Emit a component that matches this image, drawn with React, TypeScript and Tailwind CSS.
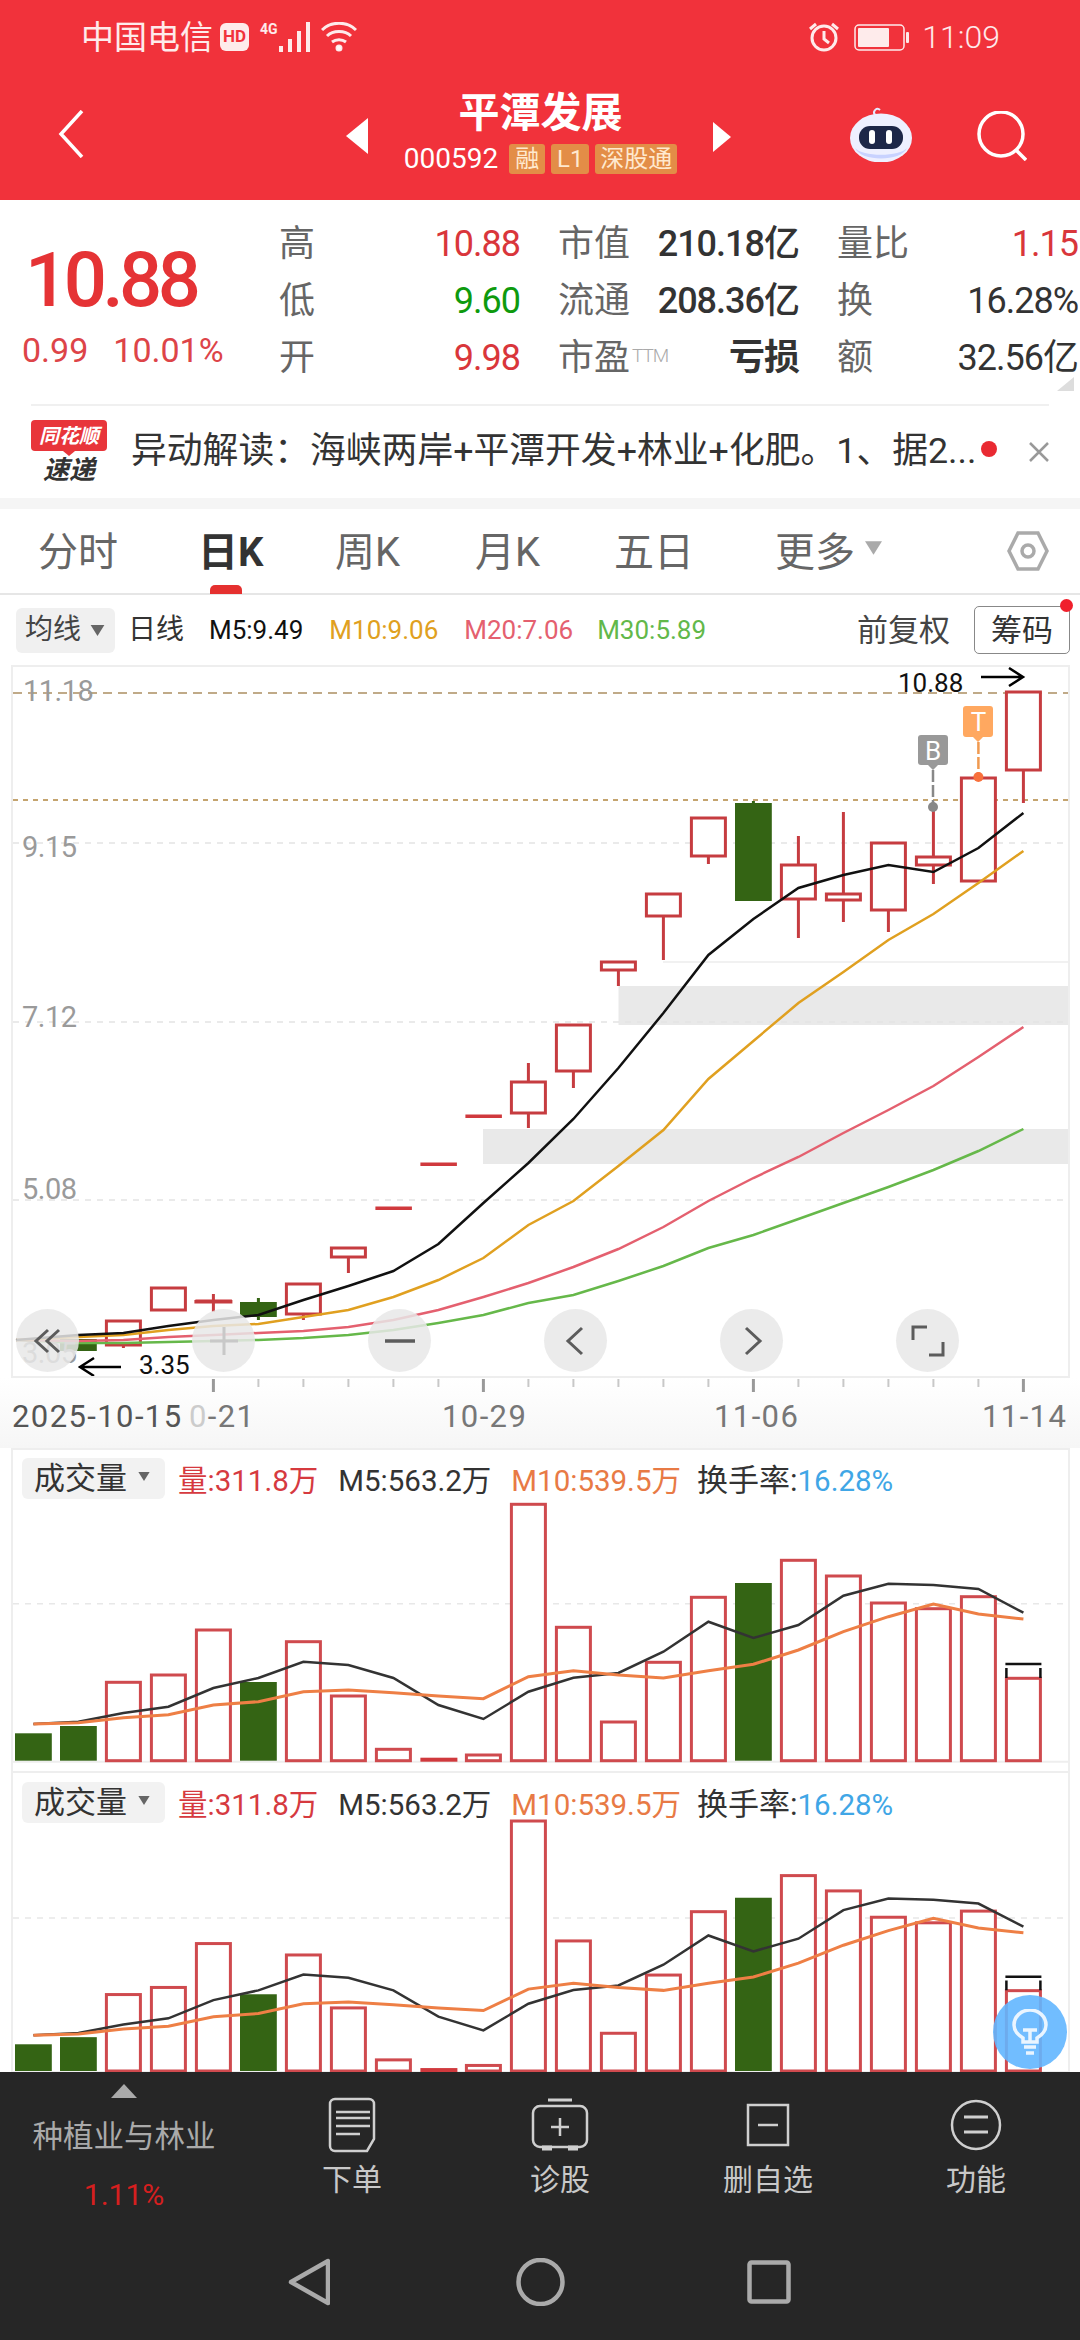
const cx = (i: number) => 33.4 + 45 * i;

// [index, bodyTop, bodyBottom, wickTop, wickBottom, green]
const candles: [number, number, number, number?, number?, boolean?][] = [
  [1, 1339, 1351, 1339, 1351, true],
  [2, 1321, 1345, 1321, 1348],
  [3, 1288, 1310],
  [4, 1300, 1302, 1294, 1312],
  [5, 1302, 1317, 1298, 1320, true],
  [6, 1284, 1314, 1284, 1320],
  [7, 1248, 1257, 1248, 1273],
  [8, 1207, 1209],
  [9, 1163, 1165],
  [10, 1115, 1117],
  [11, 1082, 1113, 1063, 1128],
  [12, 1025, 1071, 1025, 1088],
  [13, 962, 970, 962, 986],
  [14, 894, 916, 894, 960],
  [15, 818, 856, 818, 864],
  [16, 803, 901, 801, 901, true],
  [17, 865, 899, 836, 938],
  [18, 894, 900, 812, 922],
  [19, 843, 910, 843, 932],
  [20, 857, 865, 807, 884],
  [21, 778, 881],
  [22, 692, 770, 692, 803],
];

const m5 = [1335, 1333, 1326, 1320, 1315, 1300, 1286, 1271, 1244, 1203, 1163, 1119, 1068, 1013, 955, 919, 888, 875, 865, 872, 848, 813];
const m10 = [1337, 1335, 1330, 1326, 1324, 1317, 1310, 1297, 1280, 1258, 1225, 1201, 1166, 1130, 1079, 1041, 1003, 972, 940, 914, 883, 851];
const m20 = [1341, 1340, 1337, 1335, 1333, 1331, 1327, 1320, 1310, 1297, 1283, 1267, 1249, 1227, 1201, 1178, 1157, 1133, 1110, 1086, 1057, 1027];
const m30 = [1343, 1343, 1342, 1341, 1340, 1338, 1335, 1330, 1323, 1315, 1303, 1295, 1281, 1266, 1248, 1235, 1219, 1203, 1187, 1170, 1151, 1129];

const linePoints = (ys: number[]) => `16,1340 ` + ys.map((y, i) => `${cx(i + 1)},${y}`).join(' ');

const volTops = [1733.3, 1726, 1682.3, 1675, 1630, 1682, 1641.7, 1696, 1749.3, 1757.7, 1755, 1504.3, 1627.3, 1722, 1662.3, 1597.3, 1583, 1560.3, 1576, 1603, 1608.7, 1596.7, 1678.3];
const volGreen = [0, 1, 5, 16];
const volM5 = [1724, 1721.7, 1713, 1706.7, 1688, 1678, 1661.7, 1665, 1678, 1705, 1719, 1691.7, 1677.7, 1673, 1651.7, 1621.7, 1638, 1625, 1595.7, 1583.7, 1585, 1589, 1612.7];
const volM10 = [1724, 1722.7, 1717.7, 1714.7, 1705, 1701.7, 1691.7, 1690, 1692.7, 1696, 1698.7, 1676.7, 1670.7, 1675, 1678, 1670.7, 1664.3, 1650, 1631.7, 1616.7, 1604, 1614, 1619];

const Tri = ({ className }: { className: string }) => (
  <svg viewBox="0 0 10 8" className={className} fill="currentColor">
    <path d="M0 0h10L5 8z" />
  </svg>
);

const StatusBar = () => (
  <div className="flex h-[74px] items-center pl-[81px] pr-[80px] text-white/90">
    <span className="text-[33px] leading-none">中国电信</span>
    <span className="ml-[7px] flex h-[28px] w-[29px] items-center justify-center rounded-[6px] bg-white/90 text-[17px] font-bold text-[#f1323b]">HD</span>
    <span className="mb-[16px] ml-[11px] w-[18px] text-[14px] font-bold leading-none">4G</span>
    <svg viewBox="0 0 34 30" className="h-[30px] w-[34px]" fill="currentColor">
      <rect x="1" y="24" width="4" height="6" />
      <rect x="10" y="17" width="4" height="13" />
      <rect x="19" y="9" width="4" height="21" />
      <rect x="28" y="0" width="4" height="30" />
    </svg>
    <svg viewBox="0 0 36 30" className="ml-[9px] h-[30px] w-[36px]" fill="none" stroke="currentColor" strokeWidth="3">
      <path d="M1 8c9-9 25-9 34 0" />
      <path d="M6 14c6-6 18-6 24 0" />
      <path d="M11 20c4-3 10-3 14 0" />
      <circle cx="18" cy="26" r="2" fill="currentColor" />
    </svg>
    <svg viewBox="0 0 32 30" className="ml-auto h-[30px] w-[32px]" fill="none" stroke="currentColor" strokeWidth="3">
      <circle cx="16" cy="16" r="12" />
      <path d="M16 9v8l5 4M2 7l6-5M30 7l-6-5" />
    </svg>
    <svg viewBox="0 0 56 27" className="ml-[14px] h-[27px] w-[56px]">
      <rect x="1" y="1" width="49" height="25" rx="4" fill="none" stroke="currentColor" strokeWidth="1.5" />
      <rect x="4" y="4" width="31" height="19" rx="1" fill="currentColor" />
      <rect x="52" y="8" width="3" height="11" rx="1" fill="currentColor" />
    </svg>
    <span className="ml-[12px] text-[32px] font-light leading-none">11:09</span>
  </div>
);

const Badge = ({ text, w }: { text: string; w: string }) => (
  <span className={`flex h-[30px] items-center justify-center rounded-[3px] bg-[#e38d47] text-[24px] leading-none text-[#ffe9cf] ${w}`}>{text}</span>
);

const Robot = () => (
  <svg viewBox="0 0 62 56" className="h-[56px] w-[62px]">
    <path d="M25 9c-3-4 2-8 5-5" fill="none" stroke="#e6e9ff" strokeWidth="2" />
    <ellipse cx="31" cy="32" rx="31" ry="24.5" fill="#eef0ff" />
    <path d="M5 42c7 9 45 9 52 0-6 14-46 14-52 0z" fill="#c8d2ff" />
    <rect x="9" y="20" width="44" height="23" rx="11" fill="#1d2748" />
    <rect x="19" y="24" width="6" height="14" rx="3" fill="#fff" />
    <rect x="36" y="24" width="6" height="14" rx="3" fill="#fff" />
  </svg>
);

const Header = () => (
  <div className="h-[200px] bg-[#f1323b] text-white">
    <StatusBar />
    <div className="flex h-[126px] items-start">
      <svg viewBox="0 0 26 48" className="ml-[58px] mt-[36px] h-[48px] w-[26px]" fill="none" stroke="#fff" strokeWidth="3.5">
        <path d="M24 1L3 24l21 23" />
      </svg>
      <svg viewBox="0 0 22 36" className="ml-[262px] mt-[44px] h-[36px] w-[22px]" fill="#fff">
        <path d="M22 0v36L0 18z" />
      </svg>
      <div className="flex w-[345px] flex-col items-center">
        <div className="mt-[15px] text-[41px] font-bold leading-[48px]">平潭发展</div>
        <div className="mt-[7px] flex h-[30px] items-center gap-[6px]">
          <span className="mr-[5px] text-[28px] leading-none">000592</span>
          <Badge text="融" w="w-[36px]" />
          <Badge text="L1" w="w-[38px]" />
          <Badge text="深股通" w="w-[82px]" />
        </div>
      </div>
      <svg viewBox="0 0 18 30" className="mt-[48px] h-[30px] w-[18px]" fill="#fff">
        <path d="M0 0v30L18 15z" />
      </svg>
      <div className="ml-[119px] mt-[32px]">
        <Robot />
      </div>
      <svg viewBox="0 0 50 50" className="ml-[65px] mt-[37px] h-[50px] w-[50px]" fill="none" stroke="#fff" strokeWidth="3.5">
        <circle cx="24" cy="23" r="22" />
        <path d="M39 39l10 10" />
      </svg>
    </div>
  </div>
);

const Cell = ({ label, value, cls, sup }: { label: string; value: string; cls: string; sup?: string }) => (
  <div className="flex items-center justify-between">
    <span className="flex items-start text-[36px] leading-none text-[#666]">
      {label}
      {sup && <span className="ml-[2px] mt-[6px] text-[19px] font-light leading-none tracking-[-1px] text-[#aaa]">{sup}</span>}
    </span>
    <span className={`text-[36px] leading-none tracking-[-1px] ${cls}`}>{value}</span>
  </div>
);

const Quote = () => (
  <div className="relative flex h-[204px] pt-[15px]">
    <div className="w-[279px]">
      <div className="mt-[27px] pl-[25px] text-[76px] font-medium leading-none tracking-[-4.5px] text-[#e53335]">10.88</div>
      <div className="mt-[15px] flex pl-[22px] text-[34px] leading-none text-[#dd4448]">
        <span>0.99</span>
        <span className="ml-[25px]">10.01%</span>
      </div>
    </div>
    <div className="grid h-[171px] w-[799px] grid-cols-3 grid-rows-3 gap-x-[38px]">
      <Cell label="高" value="10.88" cls="text-[#d9363b]" />
      <Cell label="市值" value="210.18亿" cls="font-medium text-[#333]" />
      <Cell label="量比" value="1.15" cls="text-[#d9363b]" />
      <Cell label="低" value="9.60" cls="text-[#0e9a0e]" />
      <Cell label="流通" value="208.36亿" cls="font-medium text-[#333]" />
      <Cell label="换" value="16.28%" cls="text-[#333]" />
      <Cell label="开" value="9.98" cls="text-[#d9363b]" />
      <Cell label="市盈" sup="TTM" value="亏损" cls="font-bold text-[#333]" />
      <Cell label="额" value="32.56亿" cls="text-[#333]" />
    </div>
    <svg viewBox="0 0 17 14" className="absolute right-[6px] top-[177px] h-[14px] w-[17px]" fill="#ddd">
      <path d="M17 0v14H0z" />
    </svg>
  </div>
);

const News = () => (
  <div className="mx-[31px] flex h-[94px] items-center border-t-2 border-[#f0f0f0]">
    <div className="flex h-[64px] w-[76px] shrink-0 flex-col items-center">
      <div className="flex h-[31px] w-[76px] items-center justify-center rounded-[4px] bg-[#e8353a] text-[20px] font-bold italic leading-none text-white">同花顺</div>
      <svg viewBox="0 0 12 5" className="h-[5px] w-[12px]" fill="#e8353a">
        <path d="M0 0h12L6 5z" />
      </svg>
      <div className="text-[26px] font-bold italic leading-[28px] text-[#333]">速递</div>
    </div>
    <div className="ml-[24px] w-[842px] shrink-0 whitespace-nowrap text-[35.8px] leading-none text-[#333]">异动解读：海峡两岸+平潭开发+林业+化肥。1、据2...</div>
    <div className="mb-[6px] ml-[8px] h-[16px] w-[16px] shrink-0 rounded-full bg-[#e92a32]" />
    <svg viewBox="0 0 20 20" className="ml-[32px] h-[20px] w-[20px] shrink-0" fill="none" stroke="#999" strokeWidth="2.5">
      <path d="M1 1l18 18M19 1L1 19" />
    </svg>
  </div>
);

const Tabs = () => (
  <div className="flex h-[86px] items-center border-b-2 border-[#e6e6e6] pl-[38px] pt-[4px] text-[40px] leading-none text-[#666]">
    <span className="w-[160px]">分时</span>
    <span className="relative w-[137px] font-bold text-[#333]">
      日K
      <span className="absolute left-[12px] top-[52px] h-[9px] w-[32px] rounded-t-[5px] bg-[#e5302f]" />
    </span>
    <span className="w-[140px]">周K</span>
    <span className="w-[139px]">月K</span>
    <span className="w-[161px]">五日</span>
    <span className="flex w-[232px] items-center">
      更多
      <Tri className="mb-[10px] ml-[10px] h-[14px] w-[17px] text-[#aaa]" />
    </span>
    <svg viewBox="0 0 42 40" className="mb-[4px] h-[40px] w-[42px]" fill="none" stroke="#aaa" strokeWidth="3.5">
      <path d="M11 2h20l9 18-9 18H11L2 20z" />
      <circle cx="21" cy="20" r="6" />
    </svg>
  </div>
);

const IndicatorBar = () => (
  <div className="flex h-[70px] items-center pl-[16px] text-[26px] leading-none">
    <div className="flex h-[45px] w-[99px] items-center rounded-[6px] bg-[#f0f0f0] pl-[9px] text-[28px] text-[#444]">
      均线
      <Tri className="ml-[9px] h-[11px] w-[15px] text-[#666]" />
    </div>
    <span className="ml-[13px] text-[28px] text-[#333]">日线</span>
    <span className="ml-[25px] text-[#111]">M5:9.49</span>
    <span className="ml-[26px] text-[#e0a020]">M10:9.06</span>
    <span className="ml-[26px] text-[#e4606f]">M20:7.06</span>
    <span className="ml-[24px] text-[#62b84a]">M30:5.89</span>
    <span className="ml-[151px] text-[31px] text-[#444]">前复权</span>
    <div className="relative ml-[24px] flex h-[48px] w-[96px] items-center justify-center rounded-[5px] border border-[#888] text-[31px] text-[#333]">
      筹码
      <span className="absolute -right-[4px] -top-[8px] h-[13px] w-[13px] rounded-full bg-[#f0202c]" />
    </div>
  </div>
);

const Candles = () => (
  <>
    {candles.map(([i, top, bottom, wickTop, wickBottom, green]) => {
      const x = cx(i);
      const color = green ? '#346414' : '#c63c40';
      const thin = bottom - top <= 2;
      return (
        <g key={i}>
          {wickTop !== undefined && <line x1={x} x2={x} y1={wickTop} y2={wickBottom} stroke={color} strokeWidth="3" />}
          {thin ? (
            <rect x={x - 18} y={top - 0.5} width="36.5" height="3.5" fill="#d0393d" />
          ) : green ? (
            <rect x={x - 18.4} y={top} width="36.8" height={bottom - top} fill={color} />
          ) : (
            <rect x={x - 17} y={top} width="34" height={bottom - top} fill="#fff" stroke={color} strokeWidth="3" />
          )}
        </g>
      );
    })}
    <rect x={cx(4) - 19} y="1300" width="38" height="3.5" fill="#c63c40" />
  </>
);

const ChartSvg = () => (
  <svg viewBox="13 667 1055 709" className="block h-[709px] w-[1055px]">
    <rect x="618.5" y="986" width="460" height="39" fill="#e9e9e9" />
    <rect x="483" y="1129" width="600" height="35" fill="#e9e9e9" />
    <path d="M13 843H1070M13 1022H1070M13 1200H1070" stroke="#e4e4e4" strokeWidth="1.5" strokeDasharray="6 6" />
    <path d="M663 962H1070" stroke="#ececec" strokeWidth="1.5" />
    <path d="M13 693H1070" stroke="#c0aa88" strokeWidth="2" strokeDasharray="9 6" />
    <path d="M13 800H1070" stroke="#c4a46f" strokeWidth="2" strokeDasharray="5 5" />
    <Candles />
    <polyline points={linePoints(m30)} fill="none" stroke="#66b84a" strokeWidth="2.5" />
    <polyline points={linePoints(m20)} fill="none" stroke="#e4606f" strokeWidth="2.5" />
    <polyline points={linePoints(m10)} fill="none" stroke="#e0a020" strokeWidth="2.5" />
    <polyline points={linePoints(m5)} fill="none" stroke="#111" strokeWidth="2.5" />
    <path d="M981 677h42m-14-9l14 9-14 9" fill="none" stroke="#000" strokeWidth="2.5" />
    <path d="M121 1367H80m14-9l-14 9 14 9" fill="none" stroke="#000" strokeWidth="2.5" />

    <line x1="933" x2="933" y1="770" y2="807" stroke="#888" strokeWidth="2.5" strokeDasharray="12 3" />
    <circle cx="933" cy="807" r="5" fill="#888" />
    <path d="M921 735h24a3 3 0 0 1 3 3v24a3 3 0 0 1-3 3h-7l-5 5-5-5h-7a3 3 0 0 1-3-3v-24a3 3 0 0 1 3-3z" fill="#999" />
    <text x="933" y="760" textAnchor="middle" fontSize="26" fontFamily="Roboto" fill="#fff">B</text>

    <line x1="978.4" x2="978.4" y1="742" y2="777" stroke="#f09a50" strokeWidth="2.5" strokeDasharray="12 3" />
    <circle cx="978.4" cy="777" r="5" fill="#f8703c" />
    <path d="M966 706h24a3 3 0 0 1 3 3v25a3 3 0 0 1-3 3h-7l-5 5-5-5h-7a3 3 0 0 1-3-3v-25a3 3 0 0 1 3-3z" fill="#ffa860" />
    <text x="978.4" y="731" textAnchor="middle" fontSize="26" fontFamily="Roboto" fill="#fff">T</text>
  </svg>
);

const RoundButton = ({ children }: { children: React.ReactNode }) => (
  <div className="flex h-[63px] w-[63px] items-center justify-center rounded-full bg-[#e8e8e8]/85">
    <svg viewBox="0 0 34 34" className="h-[34px] w-[34px]" fill="none" stroke="#5c5c5c" strokeWidth="3">
      {children}
    </svg>
  </div>
);

const AxisLabel = ({ text, cls }: { text: string; cls: string }) => (
  <span className={`absolute text-[29px] leading-[28px] tracking-[-0.5px] text-[#9a9a9a] ${cls}`}>{text}</span>
);

const KChart = () => (
  <div className="relative ml-[11px] mr-[10px] h-[713px] border-2 border-[#eee]">
    <ChartSvg />
    <AxisLabel text="11.18" cls="left-[10px] top-[10px]" />
    <AxisLabel text="9.15" cls="left-[9px] top-[166px]" />
    <AxisLabel text="7.12" cls="left-[9px] top-[336px]" />
    <AxisLabel text="5.08" cls="left-[9px] top-[508px]" />
    <AxisLabel text="3.05" cls="left-[9px] top-[672px]" />
    <span className="absolute left-[885px] top-[3px] text-[26px] leading-[26px] text-[#111]">10.88</span>
    <span className="absolute left-[126px] top-[685px] text-[26px] leading-[26px] text-[#111]">3.35</span>
    <div className="absolute left-[3px] top-[642px] flex gap-[113px]">
      <RoundButton>
        <path d="M17 6L5 17l12 11M28 6L16 17l12 11" />
      </RoundButton>
      <RoundButton>
        <path d="M17 3v28M3 17h28" stroke="#c8c8c8" />
      </RoundButton>
      <RoundButton>
        <path d="M2 17h30" strokeWidth="3.5" />
      </RoundButton>
      <RoundButton>
        <path d="M23 4L9 17l14 13" />
      </RoundButton>
      <RoundButton>
        <path d="M11 4l14 13-14 13" />
      </RoundButton>
      <RoundButton>
        <path d="M16 3H2v13M18 31h14V18" />
      </RoundButton>
    </div>
  </div>
);

const TimeAxis = () => (
  <div className="h-[70px] bg-gradient-to-b from-white to-[#f6f6f6]">
    <svg viewBox="0 1378 1080 16" className="block h-[16px] w-[1080px]">
      {Array.from({ length: 19 }, (_, k) => k + 4).map((i) => {
        const major = i === 4 || i === 10 || i === 16 || i === 22;
        return (
          <line key={i} x1={cx(i)} x2={cx(i)} y1="1379" y2={major ? 1392 : 1387} stroke={major ? '#999' : '#c8c8c8'} strokeWidth={major ? 3 : 2} />
        );
      })}
    </svg>
    <div className="mt-[7px] flex h-[30px] items-center whitespace-nowrap pl-[12px] text-[31px] leading-none tracking-[1.4px] text-[#777]">
      <span className="w-[177px] shrink-0 text-[#555]">2025-10-15</span>
      <span className="w-[65px] shrink-0">
        <span className="text-[#ccc]">0</span>-21
      </span>
      <span className="ml-[188px] w-[85px] shrink-0">10-29</span>
      <span className="ml-[187px] w-[85px] shrink-0">11-06</span>
      <span className="ml-[183px] shrink-0">11-14</span>
    </div>
  </div>
);

const VolumePanel = ({ outer, svgTop, svgH, head, pad, base, scale }: { outer: string; svgTop: number; svgH: string; head: string; pad: string; base: number; scale: number }) => {
  const map = (v: number) => base - (1760.7 - v) * scale;
  const line = (vals: number[]) => vals.map((v, i) => `${cx(i)},${map(v)}`).join(' ');
  const vbH = parseInt(svgH.replace(/\D/g, ''), 10);
  return (
    <div className={`ml-[11px] mr-[10px] flex flex-col border-x-2 border-t-2 border-[#eee] ${outer} ${pad}`}>
      <div className={`flex shrink-0 items-start text-[29.5px] leading-[46px] ${head}`}>
        <div className="ml-[9px] flex h-[41px] w-[143px] items-center rounded-[6px] bg-[#f2f2f2] pl-[12px] text-[31px] text-[#333]">
          成交量
          <Tri className="mb-[4px] ml-[10px] h-[9px] w-[14px] text-[#666]" />
        </div>
        <span className="ml-[13px] text-[#d63a3f]">量:311.8万</span>
        <span className="ml-[20px] text-[#333]">M5:563.2万</span>
        <span className="ml-[20px] text-[#e87a45]">M10:539.5万</span>
        <span className="ml-[16px] text-[31px] text-[#333]">
          换手率:<span className="text-[29.5px] text-[#40a6e6]">16.28%</span>
        </span>
      </div>
      <svg viewBox={`13 ${svgTop} 1055 ${vbH}`} className={`block w-[1055px] shrink-0 ${svgH}`}>
        <line x1="13" x2="1068" y1={map(1603.7)} y2={map(1603.7)} stroke="#e8e8e8" strokeWidth="1.5" strokeDasharray="6 6" />
        <line x1="13" x2="1068" y1={base + 1} y2={base + 1} stroke="#eee" strokeWidth="2" />
        {volTops.map((t, i) => {
          const x = cx(i);
          const y = map(t);
          if (volGreen.includes(i)) return <rect key={i} x={x - 18.4} y={y} width="36.8" height={base - y} fill="#346414" />;
          if (i === 9) return <rect key={i} x={x - 18} y={y} width="37" height={base - y + 1} fill="#d0393d" />;
          return <rect key={i} x={x - 17} y={y} width="34" height={base - y} fill="#fff" stroke="#cf4a4e" strokeWidth="3" />;
        })}
        <path d={`M${cx(22) - 17} ${map(1678)}V${map(1668)}M${cx(22) + 17} ${map(1678)}V${map(1668)}`} stroke="#111" strokeWidth="2.5" />
        <line x1={cx(22) - 18} x2={cx(22) + 18} y1={map(1664)} y2={map(1664)} stroke="#111" strokeWidth="2.5" />
        <polyline points={line(volM5)} fill="none" stroke="#333" strokeWidth="2.5" />
        <polyline points={line(volM10)} fill="none" stroke="#ee7f45" strokeWidth="3" />
      </svg>
    </div>
  );
};

const Action = ({ label, children }: { label: string; children: React.ReactNode }) => (
  <div className="flex flex-col items-center pt-[23px]">
    <div className="flex h-[60px] items-center">{children}</div>
    <div className="mt-[5px] text-[30px] leading-[40px] text-[#c8c8c8]">{label}</div>
  </div>
);

const BottomBar = () => (
  <div className="relative h-[268px] bg-[#262626]">
    <div className="grid h-[160px] grid-cols-[248px_repeat(4,208px)]">
      <div className="flex flex-col items-center pt-[12px]">
        <svg viewBox="0 0 26 14" className="h-[14px] w-[26px]" fill="#aaa">
          <path d="M13 0l13 14H0z" />
        </svg>
        <div className="mt-[19px] text-[30.5px] leading-[40px] text-[#aaa]">种植业与林业</div>
        <div className="mt-[18px] text-[30px] leading-[40px] text-[#d61f1f]">1.11%</div>
      </div>
      <Action label="下单">
        <svg viewBox="0 0 48 56" className="h-[56px] w-[48px]" fill="none" stroke="#cfcfcf" strokeWidth="2.5">
          <path d="M7 2h34a5 5 0 0 1 5 5v35l-7 12H7a5 5 0 0 1-5-5V7a5 5 0 0 1 5-5z" />
          <path d="M8 15h34M8 21h34M8 29h34M8 37h24" />
        </svg>
      </Action>
      <Action label="诊股">
        <svg viewBox="0 0 58 54" className="h-[54px] w-[58px]" fill="none" stroke="#cfcfcf" strokeWidth="2.5">
          <path d="M17 2h24" strokeWidth="3" />
          <rect x="2" y="8" width="54" height="41" rx="7" />
          <path d="M29 20v18M20 29h18" />
          <path d="M11 50h10M37 50h10" strokeWidth="5" />
        </svg>
      </Action>
      <Action label="删自选">
        <svg viewBox="0 0 44 44" className="h-[44px] w-[44px]" fill="none" stroke="#cfcfcf" strokeWidth="2.5">
          <rect x="2" y="2" width="40" height="40" />
          <path d="M12 22h20" />
        </svg>
      </Action>
      <Action label="功能">
        <svg viewBox="0 0 52 52" className="h-[52px] w-[52px]" fill="none" stroke="#cfcfcf" strokeWidth="2.5">
          <circle cx="26" cy="26" r="24" />
          <path d="M14 18h24M14 33h24" strokeWidth="3" />
        </svg>
      </Action>
    </div>
    <div className="flex h-[108px] items-center pb-[8px] pl-[288px]">
      <svg viewBox="0 0 42 48" className="h-[48px] w-[42px]" fill="none" stroke="#aaa" strokeWidth="4.5" strokeLinejoin="round">
        <path d="M40 3v42L3 24z" />
      </svg>
      <svg viewBox="0 0 49 48" className="ml-[186px] h-[48px] w-[49px]" fill="none" stroke="#aaa" strokeWidth="4.5">
        <circle cx="24.5" cy="24" r="22" />
      </svg>
      <svg viewBox="0 0 44 44" className="ml-[182px] h-[44px] w-[44px]" fill="none" stroke="#aaa" strokeWidth="4.5" strokeLinejoin="round">
        <rect x="2.5" y="2.5" width="39" height="39" rx="2" />
      </svg>
    </div>
    <div className="absolute -top-[77px] left-[993px] flex h-[74px] w-[74px] items-center justify-center rounded-full bg-[#62b6ff]/90">
      <svg viewBox="0 0 36 46" className="h-[46px] w-[36px]" fill="none" stroke="#eaf5ff" strokeWidth="3.5">
        <path d="M11 33v-4C6 26 2 22 2 16a16 15 0 0 1 32 0c0 6-4 10-9 13v4z" />
        <path d="M11 21h14M18 21v12M12 38h12M14 44h8" />
      </svg>
    </div>
  </div>
);

export default function App() {
  return (
    <div className="h-[2340px] w-[1080px] overflow-hidden bg-white font-[family-name:Roboto,'Noto_Sans_CJK_SC',sans-serif]">
      <Header />
      <Quote />
      <News />
      <div className="h-[11px] bg-[#f5f5f5]" />
      <Tabs />
      <IndicatorBar />
      <KChart />
      <TimeAxis />
      <VolumePanel outer="h-[323px]" svgTop={1502} svgH="h-[269px]" head="h-[44px]" pad="pt-[8px]" base={1760.7} scale={1} />
      <VolumePanel outer="h-[301px]" svgTop={1819} svgH="h-[253px]" head="h-[37px]" pad="pt-[9px]" base={2071} scale={0.975} />
      <BottomBar />
    </div>
  );
}
